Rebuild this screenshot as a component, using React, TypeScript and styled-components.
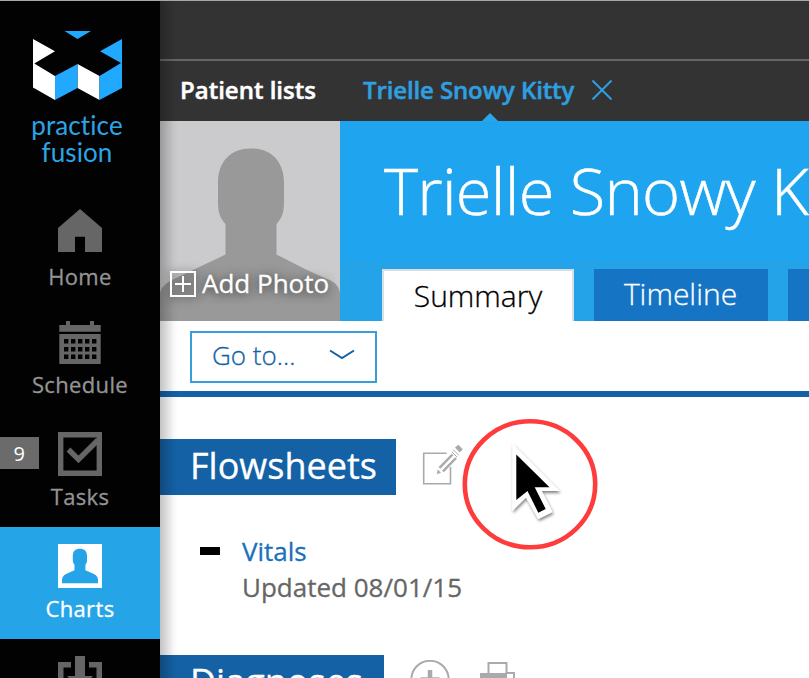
import React from 'react';
import styled, { createGlobalStyle } from 'styled-components';

const GlobalStyle = createGlobalStyle`
  * { box-sizing: border-box; }
  body { margin: 0; background: #fff; overflow: hidden; }
  svg { display: block; flex: none; }
`;

const Page = styled.div`
  position: relative;
  display: flex;
  width: 809px;
  height: 678px;
  overflow: hidden;
  border-top: 1px solid #a6a8a7;
  font-family: 'Open Sans', 'Noto Sans', sans-serif;
  -webkit-text-stroke: 0.3px currentColor;
  white-space: nowrap;
`;

const Sidebar = styled.nav`
  width: 160px;
  flex: none;
  background: #020202;
  display: flex;
  flex-direction: column;
`;

const Brand = styled.div`
  height: 190px;
  flex: none;
  padding: 30px 5px 0 0;
  display: flex;
  flex-direction: column;
  align-items: center;
`;

const BrandName = styled.div`
  margin: 11px 1px 0 0;
  font-family: Lato, sans-serif;
  font-size: 26px;
  line-height: 27px;
  letter-spacing: 0.1px;
  text-align: center;
  color: #2ba5e6;
  -webkit-text-stroke: 0;
`;

const NavItem = styled.a<{ $active?: boolean; $drop?: number }>`
  position: relative;
  height: 112px;
  flex: none;
  padding-top: 17px;
  display: flex;
  flex-direction: column;
  align-items: center;
  gap: ${(p) => p.$drop ?? 5}px;
  font-size: 22px;
  font-weight: 500;
  line-height: 30px;
  letter-spacing: 0.35px;
  color: ${(p) => (p.$active ? '#fff' : '#949494')};
  background: ${(p) => (p.$active ? '#26a4e8' : 'transparent')};
`;

const Badge = styled.span`
  position: absolute;
  left: 0;
  top: 22px;
  width: 39px;
  height: 32px;
  background: #6b6b6b;
  color: #fff;
  font-size: 20px;
  font-weight: 400;
  line-height: 33px;
  text-align: center;
  -webkit-text-stroke: 0;
`;

const Main = styled.main`
  position: relative;
  flex: 1;
  min-width: 0;
  overflow: hidden;
  &::after {
    content: '';
    position: absolute;
    left: 0;
    top: 0;
    bottom: 0;
    width: 18px;
    background: linear-gradient(90deg, rgba(0, 0, 0, 0.24), rgba(0, 0, 0, 0.13) 40%, rgba(0, 0, 0, 0.03) 75%, transparent);
  }
`;

const TopBar = styled.div`
  height: 60px;
  background: #333;
  border-bottom: 2px solid #666;
`;

const PatientBar = styled.div`
  height: 60px;
  background: #333;
  display: flex;
  padding-left: 20px;
  font-size: 24px;
  font-weight: 600;
  line-height: 57px;
  -webkit-text-stroke: 0.5px currentColor;
`;

const ListsLink = styled.a`
  color: #fff;
  width: 183px;
`;

const PatientLink = styled.a`
  position: relative;
  color: #2f9fe0;
  width: 229px;
  letter-spacing: -0.12px;
  &::after {
    content: '';
    position: absolute;
    left: 119px;
    bottom: 0;
    border: 8px solid transparent;
    border-top: 0;
    border-bottom-color: #2aa5e8;
  }
`;

const CloseIcon = styled.svg`
  margin-top: 19px;
`;

const Hero = styled.header`
  display: flex;
  height: 200px;
`;

const Photo = styled.div`
  width: 180px;
  flex: none;
  display: grid;
  background: #cbcbcd;
  overflow: hidden;
  > * { grid-area: 1 / 1; }
`;

const AddPhoto = styled.div`
  align-self: end;
  z-index: 1;
  display: flex;
  align-items: center;
  gap: 6px;
  padding: 0 0 20px 10px;
  color: #fff;
  font-size: 26px;
  line-height: 36px;
  text-shadow: 0 2px 8px rgba(0, 0, 0, 0.5), 0 0 14px rgba(0, 0, 0, 0.3);
  svg { filter: drop-shadow(0 1px 5px rgba(0, 0, 0, 0.6)); margin-top: 1px; }
`;

const Banner = styled.div`
  flex: 1;
  min-width: 0;
  background: linear-gradient(#1fa4ef 140px, #25a3e8 140px);
`;

const PatientName = styled.h1`
  margin: 0;
  height: 148px;
  padding-left: 44px;
  color: #fff;
  font-size: 65px;
  font-weight: 300;
  line-height: 139px;
  letter-spacing: -0.75px;
  -webkit-text-stroke: 0.5px currentColor;
`;

const Tabs = styled.div`
  display: flex;
  gap: 20px;
  padding-left: 42px;
  height: 52px;
`;

const Tab = styled.a<{ $w: number; $selected?: boolean }>`
  width: ${(p) => p.$w}px;
  flex: none;
  text-align: center;
  font-size: 30px;
  font-weight: 300;
  line-height: 50px;
  text-indent: ${(p) => (p.$selected ? 0 : -1)}px;
  color: ${(p) => (p.$selected ? '#000' : '#fff')};
  background: ${(p) => (p.$selected ? '#fff' : '#1574c4')};
  border: solid #dcdce4;
  border-width: ${(p) => (p.$selected ? '2px 2px 0' : '0')};
`;

const Toolbar = styled.div`
  height: 76px;
  border-bottom: 6px solid #1461a5;
  padding: 10px 0 0 30px;
  background: #fff;
`;

const GoTo = styled.button`
  width: 187px;
  height: 52px;
  border: 2px solid #369fda;
  background: #fff;
  display: flex;
  align-items: center;
  justify-content: space-between;
  padding: 0 20px 4px;
  font: 300 26px/44px 'Open Sans', sans-serif;
  color: #1461a5;
  -webkit-text-stroke: 0.3px currentColor;
`;

const SectionHead = styled.div`
  display: flex;
  gap: 26px;
  height: 56px;
`;

const SectionTitle = styled.h2<{ $w: number }>`
  margin: 0;
  width: ${(p) => p.$w}px;
  padding-left: 30px;
  background: #1461a5;
  color: #fff;
  font-size: 36px;
  font-weight: 400;
  line-height: 54px;
`;

const Sections = styled.div`
  padding-top: 42px;
`;

const Entry = styled.div`
  display: flex;
  height: 160px;
  padding: 38px 0 0 40px;
  gap: 22px;
`;

const Dash = styled.span`
  width: 20px;
  height: 8px;
  margin-top: 14px;
  background: #000;
`;

const EntryText = styled.div`
  font-size: 26px;
  line-height: 36px;
  color: #666;
`;

const EntryLink = styled.a`
  display: block;
  color: #1b70bd;
`;

const HeadIcons = styled.div`
  display: flex;
  gap: 30px;
  padding-top: 5px;
`;

const Pointer = styled.svg`
  position: absolute;
  left: 460px;
  top: 416px;
`;

const G = '#666';

export default function App() {
  return (
    <>
      <GlobalStyle />
      <Page>
        <Sidebar>
          <Brand>
            <svg width="90" height="70" viewBox="0 0 90 70">
              <path fill="#fff" d="M0 8 22 20.2 1.3 32.5 22 45V69L0 56.5ZM44.5 33 66.5 45V69L44.5 57Z" />
              <path fill="#20a9ff" d="M31.5 0H58L44.5 8ZM89 8 67 20.2 88 32 66.5 45V69L89 57ZM44.5 33 22 45V69L44.5 57Z" />
            </svg>
            <BrandName>practice<br />fusion</BrandName>
          </Brand>
          <NavItem $drop={9}>
            <svg width="44" height="44" viewBox="0 0 44 44"><path fill={G} d="M22 1 44 20V44.6H27V28.7H17V44.6H0V20Z" /></svg>
            Home
          </NavItem>
          <NavItem>
            <svg width="44" height="44" viewBox="0 0 44 44" fill={G}>
              <path d="M8 1H12V5H32V1H36V5H42.7V11.8H1.3V5H8Z" />
              <path fillRule="evenodd" d={`M1.3 14H42.7V44H1.3Z` + [6, 13, 20, 27, 34].map((x) => [19, 27, 34.5].map((y) => `M${x} ${y}v4.4h4.4v-4.4Z`).join('')).join('')} />
            </svg>
            Schedule
          </NavItem>
          <NavItem>
            <Badge>9</Badge>
            <svg width="44" height="44" viewBox="0 0 44 44" fill="none" stroke={G} strokeWidth="5.4">
              <path d="M2.7 2.7H41.3V41.3H2.7Z" />
              <path d="M10.5 17.5 20.5 27.5 40 8" />
            </svg>
            Tasks
          </NavItem>
          <NavItem $active>
            <svg width="44" height="44" viewBox="0 0 44 44">
              <path fill="#fff" d="M0 0H44V44H0Z" />
              <path fill="#26a4e8" d="M14.8 12C14.8 7 17.5 4.8 21.9 4.8S29 7 29 12V16C29 18.500 28.500 19.500 27.400 20.500V26.300L36 30C39 31.500 40 33.500 40 36V39.300H4V36C4 33.500 5 31.500 8 30L16.500 26.300V20.500C15.400 19.500 14.800 18.500 14.800 16Z" />
            </svg>
            Charts
          </NavItem>
          <NavItem>
            <svg width="44" height="44" viewBox="0 0 44 44" fill={G}>
              <path d="M17 0H27V20H35L22 34 9 20H17Z" />
              <path d="M0 6H13V11.500H5.500V38H38.500V11.500H31V6H44V44H0Z" />
            </svg>
          </NavItem>
        </Sidebar>
        <Main>
          <TopBar />
          <PatientBar>
            <ListsLink>Patient lists</ListsLink>
            <PatientLink>Trielle Snowy Kitty</PatientLink>
            <CloseIcon width="20" height="20" viewBox="0 0 20 20" stroke="#2f9fe0" strokeWidth="2"><path d="M.5.5 19.500 19.500M19.500.5.5 19.500" /></CloseIcon>
          </PatientBar>
          <Hero>
            <Photo>
              <svg width="180" height="200" viewBox="0 0 180 200">
                <path fill="#999" d="M58 62C58 40 71 27.500 91 27.500S124 40 124 62V80C124 92 122 97 116.500 103V133.500L147 149L166 157.500C175 161 179 165 180 172V200H0V172C2 165 6 162 14 158L33 149 65.500 133.500V103C60 97 58 92 58 80Z" />
              </svg>
              <AddPhoto>
                <svg width="26" height="26" viewBox="0 0 26 26" fill="none" stroke="#fff" strokeWidth="2"><path d="M1 1H25V25H1ZM5 13H21M13 5V21" /></svg>
                Add Photo
              </AddPhoto>
            </Photo>
            <Banner>
              <PatientName>Trielle Snowy Kitty</PatientName>
              <Tabs>
                <Tab $w={192} $selected>Summary</Tab>
                <Tab $w={174}>Timeline</Tab>
                <Tab $w={174} />
              </Tabs>
            </Banner>
          </Hero>
          <Toolbar>
            <GoTo>
              Go to...
              <svg width="26" height="12" viewBox="0 0 26 12" fill="none" stroke="#1461a5" strokeWidth="2"><path d="M1 1.500 13 9 25 1.500" /></svg>
            </GoTo>
          </Toolbar>
          <Sections>
            <SectionHead>
              <SectionTitle $w={236}>Flowsheets</SectionTitle>
              <HeadIcons>
                <svg width="42" height="42" viewBox="0 0 42 42" fill="none" stroke="#aaa" strokeWidth="1.600">
                  <path d="M24.700 9.300H1.700V39.800H28.500V23" />
                  <g transform="translate(0 1)">
                    <path stroke="none" fill="#aaa" d="M14.700 29.300 15.700 24.500 19 27.800ZM33 2.500 36.300-.2 40.800 4.300 37.700 7.600Z" />
                    <path strokeWidth="2.500" d="M17.500 22.800 30.500 9.500M21 26.400 34 13" />
                    <path strokeWidth="1" d="M31.300 4.800 36.800 10.300M29.800 6.800 35 12" />
                  </g>
                </svg>
              </HeadIcons>
            </SectionHead>
            <Entry>
              <Dash />
              <EntryText>
                <EntryLink>Vitals</EntryLink>
                Updated 08/01/15
              </EntryText>
            </Entry>
            <SectionHead>
              <SectionTitle $w={224}>Diagnoses</SectionTitle>
              <HeadIcons>
                <svg width="40" height="40" viewBox="0 0 40 40" fill="none" stroke="#aaa" strokeWidth="2">
                  <circle cx="20" cy="19.500" r="18.700" />
                  <path strokeWidth="4.500" d="M20 10V29M10.500 19.500H29.500" />
                </svg>
                <svg width="36" height="36" viewBox="0 0 36 36" fill="none" stroke="#aaa" strokeWidth="2">
                  <path d="M8.500 14V3H26.500V14" />
                  <path fill="#aaa" stroke="none" d="M0 13H27V19H0ZM25.500 12H35V28H33V14H25.500Z" />
                </svg>
              </HeadIcons>
            </SectionHead>
          </Sections>
        </Main>
        <Pointer width="140" height="136" viewBox="460 417 140 136">
          <defs>
            <filter id="cursor-shadow" x="-30%" y="-30%" width="160%" height="160%">
              <feDropShadow dx="1" dy="2" stdDeviation="1.500" floodOpacity="0.5" />
            </filter>
          </defs>
          <ellipse cx="530" cy="484.300" rx="65.200" ry="63" fill="none" stroke="#ff3c3c" strokeWidth="4.600" />
          <path filter="url(#cursor-shadow)" fill="#fff" d="M512.300 443.500 559.700 491H541.700L552.500 512 538.300 519 526 497.500 512.300 511Z" />
          <path fill="#000" d="M516.300 454.500 549.500 487.300H534.700L545.700 509 538.300 512.700 527.500 491 516.300 500Z" />
        </Pointer>
      </Page>
    </>
  );
}
